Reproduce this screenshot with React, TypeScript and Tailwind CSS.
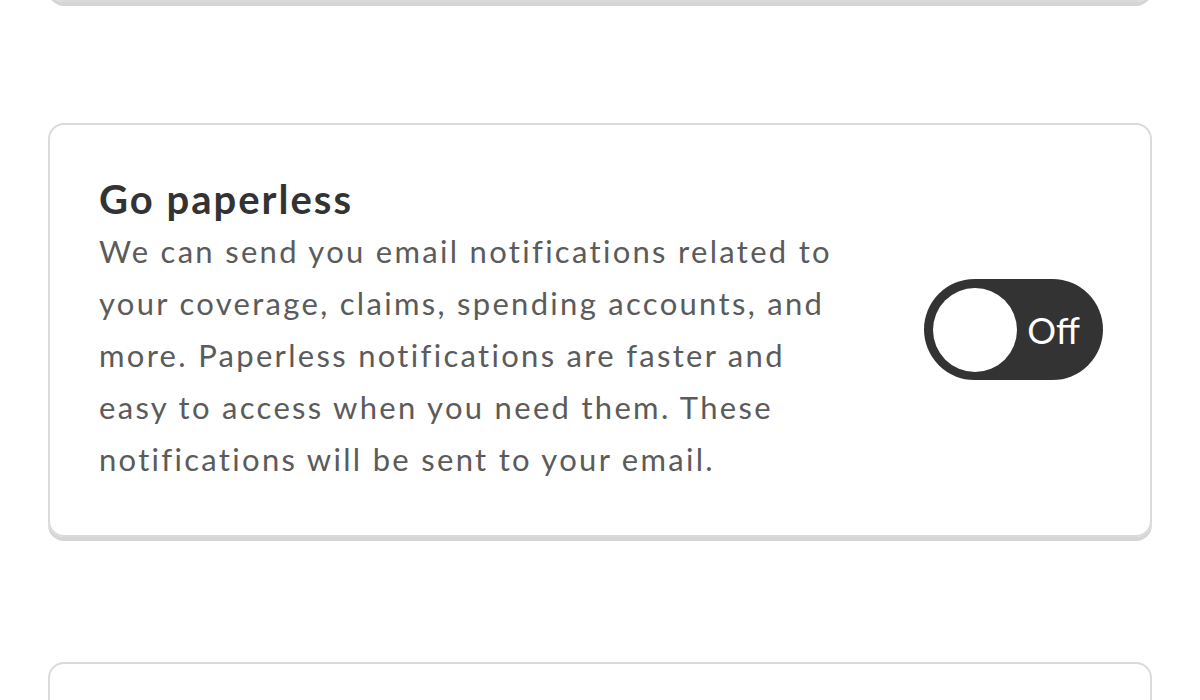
export default function App() {
  return (
    <div className="h-[700px] overflow-hidden bg-white px-12 font-['Lato',sans-serif]">
      <div className="flex flex-col gap-[121px]">
        <div className="-mt-[56px] h-[58px] rounded-2xl border-2 border-[#dadada] shadow-[0_4px_0_#d6d6d6]" />

        <div className="flex items-center justify-between rounded-2xl border-2 border-[#dadada] pb-[50px] pl-[49px] pr-[47px] pt-[49px] shadow-[0_4px_0_#d6d6d6]">
          <div className="w-[750px]">
            <h2 className="text-[40px] font-bold leading-[51px] tracking-[2px] text-[#333333]">
              Go paperless
            </h2>
            <p className="text-[31px] leading-[52px] tracking-[2.3px] text-[#5b5b5b]">
              We can send you email notifications related to your coverage,
              claims, spending accounts, and more. Paperless notifications are
              faster and easy to access when you need them. These notifications
              will be sent to your email.
            </p>
          </div>

          <button
            type="button"
            className="flex h-[101px] w-[179px] items-center rounded-full bg-[#333333] pl-[9px] pr-[23px]"
          >
            <span className="h-[84px] w-[84px] rounded-full bg-white" />
            <span className="ml-auto text-[36px] leading-none text-white">
              Off
            </span>
          </button>
        </div>

        <div className="mt-[4px] h-[120px] rounded-2xl border-2 border-[#dadada] shadow-[0_4px_0_#d6d6d6]" />
      </div>
    </div>
  );
}
